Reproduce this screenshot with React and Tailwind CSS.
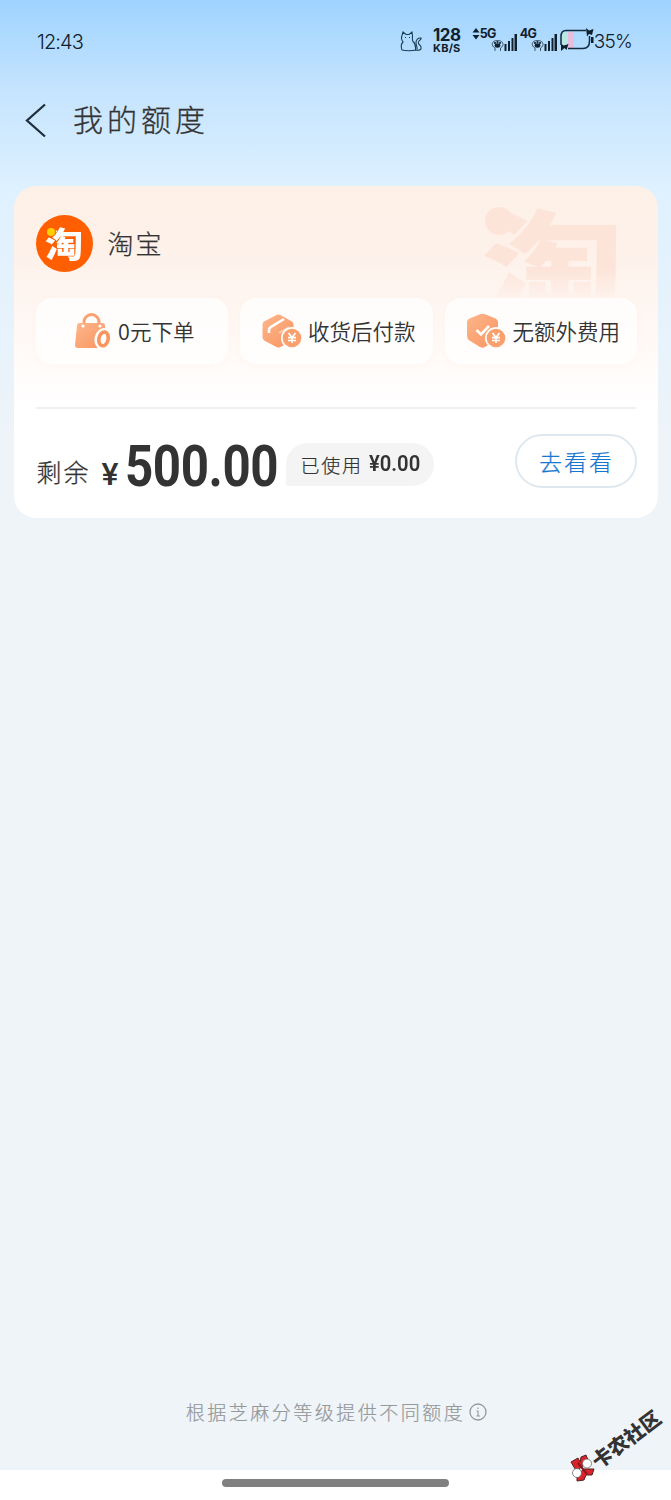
import React from 'react';

const BagIcon = () => (
    <svg className="h-9 w-[38px] shrink-0" viewBox="0 0 38 36" fill="none">
        <path d="M10 12V9a7.5 7.5 0 0 1 15 0v3" stroke="#fba270" strokeWidth="3" />
        <path d="M6 10h22q3 0 3 3l2 19q0 3-3 3H4q-3 0-3-3l2-19q0-3 3-3Z" fill="url(#orange)" />
        <circle cx="9" cy="13" r="1.6" fill="#fff" />
        <circle cx="26" cy="13" r="1.6" fill="#fff" />
        <ellipse cx="29.500" cy="26" rx="9" ry="11" fill="#fffdfb" transform="rotate(12 30 26)" />
        <ellipse cx="29.500" cy="26" rx="4.600" ry="7" stroke="#f9965f" strokeWidth="3.600" transform="rotate(12 30 26)" />
    </svg>
);

const Coin = () => (
    <g>
        <circle cx="30" cy="25" r="11" fill="#fffdfb" />
        <circle cx="30" cy="25" r="9.300" fill="#f9a06e" />
        <path d="m26.500 20 3.500 4.500 3.500-4.500M30 24.500V30M26 24.700h8M26 27.500h8" stroke="#fff" strokeWidth="1.700" />
    </g>
);

const BoxIcon = () => (
    <svg className="h-9 w-10 shrink-0" viewBox="0 0 40 36" fill="none">
        <path d="M14.500 2q2-1 4 0l11 6.200q2 1.200 2 3.300v13q0 2-2 3.200l-11 6.300q-2 1-4 0l-12-6.300q-2-1.200-2-3.200v-13q0-2.100 2-3.300Z" fill="url(#orange)" />
        <path d="M7 20v-3q0-2 2-3.200L22 6" stroke="#fff" strokeWidth="2.600" />
        <path d="m17 20 10-6" stroke="#fff" strokeWidth="2" opacity=".45" />
        <Coin />
    </svg>
);

const ShieldIcon = () => (
    <svg className="h-9 w-10 shrink-0" viewBox="0 0 40 36" fill="none">
        <path d="M14.500 1q2-.7 4 0l11 4.500q2.500 1 2.500 3.500v14q0 3-2.500 4.500L19 34q-2.500 1.500-5 0L3.500 27.500Q1 26 1 23V9q0-2.500 2.500-3.500Z" fill="url(#orange)" />
        <path d="m10.500 17 4.500 4.500 8-8.500" stroke="#fff" strokeWidth="2.600" />
        <Coin />
    </svg>
);

const CatIcon = () => (
    <svg className="h-[22px] w-[22px]" viewBox="0 0 22 22" fill="none" stroke="#1c3d55" strokeWidth="1.100">
        <path d="M2 20C.5 16 2 13 3 12 1 10 1.500 7 2 5.500L3 2l3 2.500h3L12 2l.5 4c0 2-.5 4 .5 5.500 2 1.500 3 4 2.500 8.500-3 1-10 1-13.500 0Z" />
        <path d="M15 20c5 1 6.500-.5 6-3s-3.500-2.500-2.500-5c.5-2 3-2 2.500-4-3-.5-5 2-5 4.500 0 3 1.500 4.500 1 7" />
        <path d="M5 7.500h1M9 7.500h1" />
    </svg>
);

const SignalIcon = ({ label, arrows }) => (
    <div className="relative h-[25px] w-[45px]">
        {arrows && (
            <svg className="absolute top-0 left-0 h-[13px] w-2" viewBox="0 0 8 13" fill="#10202c">
                <path d="M.5 5.500 4 1l3.500 4.500ZM.5 8 4 12.500 7.500 8Z" />
            </svg>
        )}
        <span className="absolute top-0 left-[8px] font-[Inter] text-[12.500px] leading-[13px] font-bold tracking-[-0.800px]">{label}</span>
        <svg className="absolute right-0 bottom-0 h-5 w-[26px]" viewBox="0 0 26 20" fill="#10202c">
            <path d="M13.500 12h2v7h-2zM17 9h2v10h-2zM20.500 6h2v13h-2zM23.500 2H26v17h-2.500z" />
            <ellipse cx="6.500" cy="13.500" rx="2.800" ry="2.200" />
            <circle cx="4" cy="11" r="1.100" />
            <circle cx="6.500" cy="10" r="1.100" />
            <circle cx="9" cy="11" r="1.100" />
            <path d="M4 19v-3c-4-2-4-7.500 2.500-7.500s7 5.500 3 7.500v3" fill="none" stroke="#10202c" strokeWidth=".7" />
        </svg>
    </div>
);

const BatteryIcon = () => (
    <svg className="h-[24px] w-[34px]" viewBox="0 0 34 24" fill="none">
        <path d="M2 4h6v17H2z" fill="#b8e8e6" />
        <path d="M8 4h6v17H8z" fill="#eabddd" />
        <path d="M8 20.500h15c5 0 6.500-3 6.500-7.500V8M26 2.500H6c-4 0-5 3-5 6V17" stroke="#142b3b" strokeWidth="1.500" />
        <path d="m26 0 3 2.500L33.500 1l-1.500 6-3-1-2 2.500ZM1 16l3 1.500L8.500 16l-2 6-2-2L1 23ZM31 9h2.500v6H31z" fill="#10202c" />
    </svg>
);

const features = [
    { icon: <BagIcon />, label: '0元下单' },
    { icon: <BoxIcon />, label: '收货后付款' },
    { icon: <ShieldIcon />, label: '无额外费用' },
];

const StatusBar = () => (
    <div className="flex h-20 items-start justify-between pt-[27px] pr-[39px] pl-[37px] text-[#10202c]">
        <span className="mt-[1px] font-[Inter] text-[20px] leading-7 font-light tracking-[-0.900px]">12:43</span>
        <div className="flex items-start">
            <div className="mt-[3px] mr-[10px]"><CatIcon /></div>
            <div className="mr-[10px] w-[30px] text-center font-[Inter] font-bold">
                <div className="text-[17px] leading-[16px] tracking-[-0.500px]">128</div>
                <div className="text-[11px] leading-[11px] tracking-[0.200px] whitespace-nowrap">KB/S</div>
            </div>
            <SignalIcon label="5G" arrows />
            <div className="-ml-[5px]"><SignalIcon label="4G" /></div>
            <div className="mt-[1px] ml-[3px]"><BatteryIcon /></div>
            <span className="mt-[1px] font-[Inter] text-[19px] leading-[27px] font-light tracking-[-0.800px]">35%</span>
        </div>
    </div>
);

const App = () => {
    return (
        <div className="relative flex h-[1500px] w-[671px] flex-col overflow-hidden bg-[#eff4f8] font-['Noto_Sans_CJK_SC',sans-serif] text-[#333]">
            <svg className="absolute h-0 w-0">
                <defs>
                    <linearGradient id="orange" x1="0" y1="0" x2="1" y2="1">
                        <stop stopColor="#fdb68b" />
                        <stop offset="1" stopColor="#f99461" />
                    </linearGradient>
                </defs>
            </svg>

            <div className="flex h-[1470px] flex-col bg-[linear-gradient(#9fd3ff_0px,#c5e4fe_90px,#def1ff_190px,#eff4f8_450px)]">
                <StatusBar />

                {/* Title */}
                <div className="flex h-[106px] items-start pt-[18px] pl-[25px]">
                    <svg className="mt-[5px] h-[35px] w-[22px]" viewBox="0 0 22 35" fill="none">
                        <path d="M20 1.500 2 17.500l18 16" stroke="#1f303c" strokeWidth="2.300" />
                    </svg>
                    <h1 className="-mt-[2px] ml-[26px] text-[30px] leading-[44px] font-light tracking-[4px] [-webkit-text-stroke:0.300px_#333]">我的额度</h1>
                </div>

                {/* Quota card */}
                <div className="relative mx-auto h-[332px] w-[644px] rounded-[22px] bg-[linear-gradient(#fdf0e7_0px,#fdf1e9_60px,#fff8f5_145px,#ffffff_220px)] px-[22px]">
                    <div className="absolute top-[18px] right-[34px] h-[130px] w-[144px] text-[#fde4d9] [mask-image:linear-gradient(#000_50%,transparent_75%)]">
                        <span className="absolute top-[-6px] left-[2px] origin-top scale-y-[0.850] text-[142px] leading-[144px] font-black">淘</span>
                        <span className="absolute top-[3px] left-[5px] size-[28px] rounded-full bg-[#fde4d9]" />
                    </div>
                    <div className="relative flex items-center pt-[29px]">
                        <div className="relative flex size-[57px] items-center justify-center rounded-full bg-[#ff5f00]">
                            <span className="-mt-[2px] scale-y-[0.900] text-[38px] leading-[57px] font-black text-white">淘</span>
                            <span className="absolute top-[13px] left-[11px] size-[8px] rounded-full bg-[#ffce00] ring-1 ring-[#ff5f00]" />
                        </div>
                        <h2 className="-mt-[2px] ml-[15px] text-[26px] leading-9 font-light tracking-[2px] [-webkit-text-stroke:0.250px_#333]">淘宝</h2>
                    </div>

                    <div className="relative mt-[26px] flex gap-3">
                        {features.map((item) => (
                            <div key={item.label} className="flex h-[66px] w-[192.500px] shrink-0 items-center justify-center gap-[6px] rounded-[16px] bg-white/75 pl-[5px] shadow-[0_2px_8px_rgba(255,150,100,0.05)]">
                                {item.icon}
                                <span className="text-[21.500px] leading-8 font-[350] whitespace-nowrap">{item.label}</span>
                            </div>
                        ))}
                    </div>

                    <div className="mt-[43px] h-[2px] w-[600px] bg-[#f0f1f2]" />

                    <div className="flex items-start pt-[25px]">
                        <span className="mt-[19px] ml-[1px] text-[25px] leading-9 font-light tracking-[2px] [-webkit-text-stroke:0.250px_#333]">剩余</span>
                        <span className="mt-[20px] ml-[11px] w-[23px] font-[Roboto] text-[32px] leading-10 font-medium">¥</span>
                        <div className="mt-[2px] w-[152px]">
                            <span className="inline-block origin-left scale-x-[0.850] font-[Roboto] text-[58px] leading-[60px] font-bold tracking-[-0.500px]">500.00</span>
                        </div>
                        <div className="mt-[9px] ml-[9px] flex h-[43px] w-[148px] items-center rounded-[22px] rounded-bl-[3px] bg-[#f4f4f4] pl-[15px]">
                            <span className="mt-[1px] text-[19px] font-light tracking-[1.700px] whitespace-nowrap [-webkit-text-stroke:0.200px_#333]">已使用</span>
                            <span className="-mt-[1px] ml-[6px] w-[51px]">
                                <span className="inline-block origin-left scale-x-[0.920] font-[Roboto] text-[22px] leading-7 font-semibold">¥0.00</span>
                            </span>
                        </div>
                        <button className="-mr-[1px] ml-auto h-[54px] w-[122px] rounded-full border-2 border-[#dfe8ee] pl-[2px] text-[23px] leading-[48px] font-light tracking-[2px] text-[#1677d2] [-webkit-text-stroke:0.200px_#1677d2]">去看看</button>
                    </div>
                </div>

                {/* Footer note */}
                <div className="mt-auto mb-[42px] flex items-center justify-center pl-[2px] text-[#95989b]">
                    <span className="text-[19px] leading-8 font-light tracking-[2.500px] [-webkit-text-stroke:0.200px_#95989b]">根据芝麻分等级提供不同额度</span>
                    <svg className="ml-[4px] size-[18px]" viewBox="0 0 18 18" fill="none" stroke="#95989b">
                        <circle cx="9" cy="9" r="8" strokeWidth="1.300" />
                        <path d="M7.500 8H9v5M7.500 13h3.500M9 4.500v1.500" strokeWidth="1.100" />
                    </svg>
                </div>
            </div>

            <div className="flex h-[30px] justify-center bg-white pt-[9px]">
                <div className="h-2 w-[227px] rounded-full bg-[#808080]" />
            </div>

            {/* Community stamp */}
            <svg className="absolute top-[1454px] left-[569px] size-7" viewBox="0 0 28 28">
                <path d="m2 8 7-4 2 4 1-5 5-2 2 5-2 4-5 3-4 5ZM15 15l10 0-2 6-6 0-2 5-7 1 0-6Z" fill="#dc2329" stroke="#542022" />
                <circle cx="18" cy="9.500" r="4.500" fill="#fff" stroke="#555" strokeWidth=".7" />
                <circle cx="8" cy="19" r="4.500" fill="#fff" stroke="#555" strokeWidth=".7" />
                <path d="m9 9 9 11" stroke="#85191d" strokeWidth="2" />
            </svg>
            <span className="absolute top-[1427px] left-[586px] -rotate-[37deg] text-[20px] leading-6 font-black whitespace-nowrap text-[#333]">卡农社区</span>
        </div>
    );
};

export default App;
